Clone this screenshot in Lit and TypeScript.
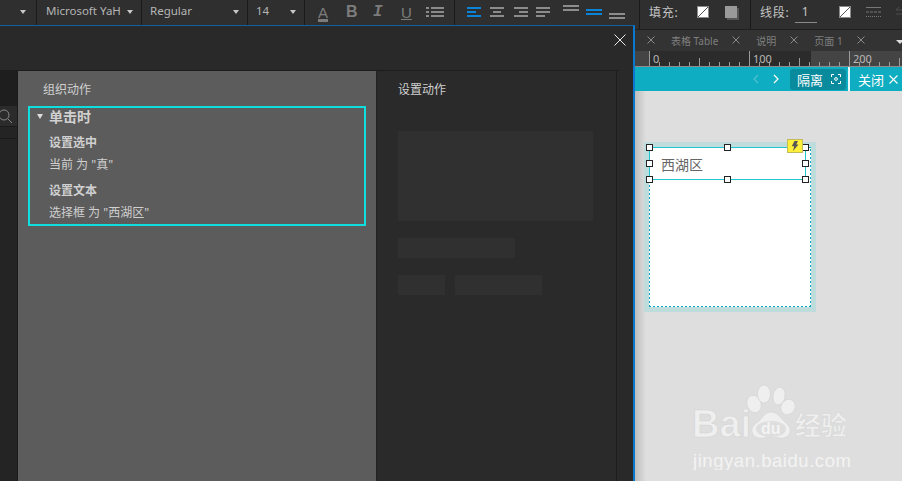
import { LitElement, html, css, svg } from "lit";
import { customElement } from "lit/decorators.js";

const CJK = `"Noto Sans", "Noto Sans CJK SC", sans-serif`;
const BLUE = "#0a84d8";
const GREY = "#8c8c8c";

const bars = (rows: [number, number, number, string][]) => html`
  <svg width="170" height="23" viewBox="0 0 170 23">
    ${rows.map(([x, y, l, c]) => svg`<rect x=${x} y=${y} width=${l} height="2" fill=${c}></rect>`)}
  </svg>`;

const noFill = html`<svg width="12" height="12" viewBox="0 0 12 12">
  <rect x=".5" y=".5" width="11" height="11" fill="#fff" stroke="#8a8a8a"></rect>
  <path d="M1 11 11 1" stroke="#555" stroke-width="1"></path></svg>`;

const cross = (s: number, c: string, sw = 1) => html`<svg width=${s} height=${s} viewBox="0 0 ${s} ${s}">
  <path d="M.5 .5 ${s - 0.5} ${s - 0.5}M${s - 0.5} .5 .5 ${s - 0.5}" stroke=${c} stroke-width=${sw} fill="none"></path></svg>`;

const handles = [649, 727, 805].flatMap((x) =>
  [147, 163, 179].filter((y) => !(x === 727 && y === 163)).map((y) => [x - 644, y - 142])
);

const ticks = Array.from({ length: 27 }, (_, i) => i * 10);

@customElement("app-root")
export class AppRoot extends LitElement {
  static styles = css`
    :host { display: block; width: 902px; height: 481px; position: relative; overflow: hidden; background: #dedede; font-family: ${css([CJK] as any)}; }
    * { box-sizing: border-box; }
    .page { display: flex; flex-direction: column; height: 481px; }

    .toolbar { display: flex; height: 30px; flex: none; background: #2f2f2f; border-bottom: 1px solid #1f1f1f; color: #b5b5b5; font-size: 11.5px; white-space: nowrap; }
    .seg { display: flex; align-items: center; height: 29px; border-right: 1px solid #1a1a1a; flex: none; padding-bottom: 8px; }
    .caret { width: 0; height: 0; border: 3.5px solid transparent; border-top: 4px solid #c8c8c8; border-bottom: 0; margin-left: auto; margin-top: 3px; }
    .s1 { width: 37px; padding-right: 10px; }
    .s2 { width: 105px; padding: 0 8px 8px 9px; }
    .s3 { width: 106px; padding: 0 8px 8px 8px; }
    .s4 { width: 57px; padding: 0 8px 8px 8px; }
    .s5 { width: 150px; padding: 0 0 5px 13px; }
    .g { color: #7c7c7c; font-family: "Liberation Sans", sans-serif; width: 28px; text-align: left; line-height: 1; }
    .g.a { font-size: 15px; width: 28px; text-decoration: underline; text-decoration-thickness: 3px; text-underline-offset: 1px; }
    .g.b { font-weight: 700; font-size: 16px; }
    .g.i { font: italic 700 16px "Liberation Mono", monospace; margin-left: -1px; width: 28px; }
    .g.u { text-decoration: underline; font-size: 15px; width: 25px; }
    .s6 { width: 185px; padding: 0 0 0 12px; align-items: flex-start; }
    .s6 svg { display: block; }
    .s7 { width: 111px; padding: 0 0 5px 9px; color: #c4c4c4; font-size: 12px; letter-spacing: .8px; }
    .s7 svg, .s8 svg { display: block; }
    .s7 .ic1 { margin-left: 18px; }
    .shadow { margin-left: 16px; width: 12px; height: 12px; background: #9a9a9a; box-shadow: 2px 2px 0 #555; }
    .s8 { flex: 1; border-right: 0; padding: 0 0 5px 9px; color: #c4c4c4; font-size: 12px; letter-spacing: .8px; }
    .num { margin-left: 5px; width: 22px; border-bottom: 1px solid #8a8a8a; padding-left: 7px; height: 18px; margin-top: 4px; line-height: 14px; flex: none; }
    .s8 .ic2 { margin-left: 22px; }
    .s8 .ic3 { margin-left: 15px; }
    .s8 .ic4 { margin-left: 14px; opacity: .35; }

    .tabs { display: flex; align-items: center; gap: 16px; height: 21px; flex: none; background: #333; padding-left: 647px; color: #7f7f7f; font-size: 10px; padding-bottom: 1px; white-space: nowrap; }
    .tabs svg { display: block; flex: none; }
    .tabs span + svg { margin-left: -2px; }
    .tabs .more { width: 0; height: 0; border: 4px solid transparent; border-top: 4px solid #ddd; border-bottom: 0; margin-left: 15px; margin-top: 4px; flex: none; }

    .ruler { display: block; height: 16px; flex: none; background: #444; border-bottom: 1px solid #8c8c8c; }
    .ruler svg { display: block; }
    .ruler text { font: 11px "Noto Sans", sans-serif; fill: #b8b8b8; }

    .isol { display: flex; align-items: center; justify-content: flex-end; height: 24px; flex: none; background: #0fadc1; color: #fff; font-size: 13px; white-space: nowrap; }
    .nav { display: block; }
    .nav.prev { margin-right: 14px; opacity: .25; }
    .nav.next { margin-right: 11px; }
    .btn { display: flex; align-items: center; gap: 8px; width: 56px; height: 21px; padding-left: 7px; border-radius: 3px; background: #0a8b9d; }
    .sep { width: 2px; height: 24px; background: #e8f8fa; margin-left: 2px; flex: none; }
    .close { display: flex; align-items: center; gap: 5px; width: 52px; padding-left: 8px; flex: none; }

    .canvas { flex: 1; position: relative; background: linear-gradient(90deg, #bdbdbd 635px, #dedede 646px); }
    .widget { position: absolute; left: 644px; top: 51px; width: 172px; height: 170px; background: #bfdcdc; }
    .paper { position: absolute; left: 5px; top: 5px; width: 162px; height: 160px; background-color: #fff;
      background-image:
        repeating-linear-gradient(90deg, #0aa9c0 0 2px, transparent 2px 4px),
        repeating-linear-gradient(90deg, #0aa9c0 0 2px, transparent 2px 4px),
        repeating-linear-gradient(0deg, #0aa9c0 0 2px, transparent 2px 4px),
        repeating-linear-gradient(0deg, #0aa9c0 0 2px, transparent 2px 4px);
      background-size: 100% 1px, 100% 1px, 1px 100%, 1px 100%;
      background-position: 0 0, 0 100%, 0 0, 100% 0;
      background-repeat: no-repeat; }
    .sel { position: absolute; left: 5px; top: 5px; width: 157px; height: 33px; border: 1px solid #1fc8d0; background: #fff; color: #666; font-size: 14px; line-height: 33px; padding-left: 11px; font-family: "Noto Sans CJK SC", sans-serif; }
    .h { position: absolute; width: 7px; height: 7px; margin: -3px 0 0 -3px; background: #fff; border: 1px solid #222; }
    .flag { position: absolute; left: 143px; top: -3px; width: 16px; height: 14px; background: #ffee3a; border: 1px solid #c2bb5c; display: flex; align-items: center; justify-content: center; }

    .wm { position: absolute; left: 690px; top: 289px; }
    .wm .t1 { font: 700 38px "Liberation Sans", sans-serif; fill: #efefef; stroke: #d4d4d4; stroke-width: .7; }
    .wm .t2 { font: 700 26px "Noto Sans CJK SC", sans-serif; fill: #efefef; stroke: #d4d4d4; stroke-width: .5; }
    .wm .t3 { font: 400 18.5px "Liberation Sans", sans-serif; fill: #f3f3f3; letter-spacing: .55px; }
    .wm .t4 { font: 700 16px "Liberation Sans", sans-serif; fill: #f3f3f3; }

    .modal { position: absolute; left: 0; top: 25px; width: 635px; height: 456px; background: #292929; border-top: 1px solid #11609f; border-right: 2px solid #0b78cf; display: flex; flex-direction: column; }
    .mhead { height: 44px; flex: none; display: flex; justify-content: flex-end; align-items: flex-start; padding: 8px 7px 0 0; }
    .mhead svg { display: block; }
    .mbody { flex: 1; display: flex; min-height: 0; width: 619px; border-top: 1px solid #1d1d1d; }
    .side { width: 18px; flex: none; background: #242424; border-right: 1px solid #1a1a1a; display: flex; flex-direction: column; overflow: hidden; }
    .side .top { height: 35px; background: #1e1e1e; flex: none; }
    .side .search { height: 21px; background: #2b2b2b; border-bottom: 1px solid #1a1a1a; flex: none; }
    .side .search svg { display: block; margin: 3px 0 0 -4px; }
    .side .row { height: 12px; flex: none; border-bottom: 1px solid #1a1a1a; }
    .org { width: 358px; flex: none; background: #5c5c5c; padding: 0 10px; color: #d0d0d0; font-size: 12px; }
    .ttl { height: 35px; display: flex; align-items: center; padding-left: 15px; }
    .box { border: 2px solid #0fdede; height: 120px; padding: 1px 0 0 19px; position: relative; }
    .ev { font-size: 14px; font-weight: 700; line-height: 16px; display: block; }
    .tri { position: absolute; left: 7px; top: 6px; width: 0; height: 0; border: 3.5px solid transparent; border-top: 5px solid #ddd; border-bottom: 0; }
    .an { font-weight: 700; line-height: 18px; margin-top: 9px; }
    .av { line-height: 18px; margin-top: 4px; }
    .an.second { margin-top: 8px; }
    .act { width: 241px; flex: none; background: #2a2a2a; border-left: 1px solid #222; border-right: 1px solid #1d1d1d; padding: 0 0 0 21px; color: #d0d0d0; font-size: 12px; }
    .act .ttl { padding-left: 0; }
    .ph { background: #303030; }
    .p1 { width: 195px; height: 90px; margin-top: 25px; }
    .p2 { width: 117px; height: 20px; margin-top: 17px; }
    .prow { display: flex; gap: 10px; margin-top: 17px; }
    .p3 { width: 47px; height: 20px; }
    .p4 { width: 87px; height: 20px; }
  `;

  render() {
    return html`
      <div class="page">
        <div class="toolbar">
          <div class="seg s1"><i class="caret"></i></div>
          <div class="seg s2">Microsoft YaH<i class="caret"></i></div>
          <div class="seg s3">Regular<i class="caret"></i></div>
          <div class="seg s4">14<i class="caret"></i></div>
          <div class="seg s5">
            <span class="g a">A</span>
            <span class="g b">B</span>
            <span class="g i">I</span>
            <span class="g u">U</span>
            <svg width="18" height="12" viewBox="0 0 18 12"><g fill="#8a8a8a"><rect y="1" width="3" height="2"></rect><rect y="5" width="3" height="2"></rect><rect y="9" width="3" height="2"></rect><rect x="5" y="1" width="13" height="2"></rect><rect x="5" y="5" width="13" height="2"></rect><rect x="5" y="9" width="13" height="2"></rect></g></svg>
          </div>
          <div class="seg s6">
            ${bars([
              [0, 7, 14, BLUE], [0, 11, 9, BLUE], [0, 15, 14, BLUE],
              [23, 7, 14, GREY], [26, 11, 8, GREY], [23, 15, 14, GREY],
              [47, 7, 14, GREY], [52, 11, 9, GREY], [47, 15, 14, GREY],
              [69, 7, 14, GREY], [69, 11, 14, GREY], [69, 15, 9, GREY],
              [96, 5, 16, GREY], [96, 9, 16, GREY],
              [119, 9, 16, BLUE], [119, 13, 16, BLUE],
              [142, 13, 16, GREY], [142, 17, 16, GREY],
            ])}
          </div>
          <div class="seg s7">
            <span>填充:</span>
            <span class="ic1">${noFill}</span>
            <i class="shadow"></i>
          </div>
          <div class="seg s8">
            <span>线段:</span>
            <span class="num">1</span>
            <span class="ic2">${noFill}</span>
            <span class="ic3"><svg width="15" height="12" viewBox="0 0 15 12"><path d="M0 1.5h15" stroke="#777"></path><path d="M0 6h15" stroke="#777" stroke-dasharray="3 1"></path><path d="M0 10.5h15" stroke="#777" stroke-dasharray="1 1"></path></svg></span>
            <span class="ic4"><svg width="10" height="12" viewBox="0 0 10 12"><path d="M10 4H1l3-3M1 8h9" stroke="#888" fill="none"></path></svg></span>
          </div>
        </div>

        <div class="tabs">
          ${cross(8, "#8a8a8a")}
          <span>表格 Table</span>${cross(8, "#8a8a8a")}
          <span>说明</span>${cross(8, "#8a8a8a")}
          <span>页面 1</span>${cross(8, "#8a8a8a")}
          <i class="more"></i>
        </div>

        <div class="ruler">
          <svg width="902" height="15" viewBox="0 0 902 15">
            <rect x="649" y="0" width="162" height="15" fill="#2b2b2b"></rect>
            ${ticks.map((t) => {
              const x = 649.5 + t;
              const h = t % 100 === 0 ? 15 : t % 50 === 0 ? 8 : 4;
              return x < 902 ? svg`<rect x=${x - 0.5} y=${15 - h} width="1" height=${h} fill="#9a9a9a"></rect>` : null;
            })}
            <text x="653" y="12">0</text>
            <text x="753" y="12">100</text>
            <text x="853" y="12">200</text>
          </svg>
        </div>

        <div class="isol">
          <svg class="nav prev" width="6" height="10" viewBox="0 0 6 10"><path d="M5 1 1 5l4 4" stroke="#fff" stroke-width="1.2" fill="none"></path></svg>
          <svg class="nav next" width="6" height="10" viewBox="0 0 6 10"><path d="M1 1l4 4-4 4" stroke="#fff" stroke-width="1.2" fill="none"></path></svg>
          <div class="btn">
            <span>隔离</span>
            <svg width="10" height="10" viewBox="0 0 10 10"><path d="M.5 3V.5H3M7 .5h2.5V3M9.5 7v2.5H7M3 9.5H.5V7" stroke="#fff" fill="none"></path><circle cx="5" cy="5" r="1.4" fill="none" stroke="#fff"></circle></svg>
          </div>
          <i class="sep"></i>
          <div class="close"><span>关闭</span>${cross(9, "#fff", 1.1)}</div>
        </div>

        <div class="canvas">
          <div class="widget">
            <div class="paper"></div>
            <div class="sel">西湖区</div>
            ${handles.map(([x, y]) => html`<i class="h" style="left:${x}px;top:${y}px"></i>`)}
            <div class="flag"><svg width="8" height="10" viewBox="0 0 8 10"><path d="M3.5 0H7L5.2 3.5H7.5L2 10l1.2-4.7H.8z" fill="#555"></path></svg></div>
          </div>
          <svg class="wm" width="170" height="90" viewBox="0 0 170 90">
            <text class="t1" x="2" y="57">Bai</text>
            <g fill="#efefef" stroke="#d4d4d4" stroke-width=".7">
              <ellipse cx="64" cy="24" rx="7" ry="9" transform="rotate(-20 64 24)"></ellipse>
              <ellipse cx="74" cy="14" rx="6.5" ry="9"></ellipse>
              <ellipse cx="89" cy="16" rx="6" ry="9" transform="rotate(10 89 16)"></ellipse>
              <ellipse cx="98" cy="27" rx="7" ry="8" transform="rotate(30 98 27)"></ellipse>
              <path d="M81 32c6 0 9 5 13 9 5 4 7 7 6 11-1 5-6 7-11 6-5-1-10-1-15 0-6 1-11-1-12-6-1-4 2-8 7-11 4-4 6-9 12-9z"></path>
            </g>
            <ellipse cx="81" cy="49" rx="15" ry="8" fill="#dedede"></ellipse>
            <text class="t4" x="71" y="54">du</text>
            <text class="t2" x="105" y="55">经验</text>
            <text class="t3" x="3" y="87">jingyan.baidu.com</text>
          </svg>
        </div>
      </div>

      <div class="modal">
        <div class="mhead">${cross(12, "#e8e8e8")}</div>
        <div class="mbody">
          <div class="side">
            <div class="top"></div>
            <div class="search">
              <svg width="18" height="16" viewBox="0 0 18 16"><circle cx="8" cy="6" r="5" fill="none" stroke="#8a8a8a"></circle><path d="M12 10l4 4" stroke="#8a8a8a"></path></svg>
            </div>
            <div class="row"></div>
          </div>
          <div class="org">
            <div class="ttl">组织动作</div>
            <div class="box">
              <i class="tri"></i>
              <span class="ev">单击时</span>
              <div class="an">设置选中</div>
              <div class="av">当前 为 "真"</div>
              <div class="an second">设置文本</div>
              <div class="av">选择框 为 "西湖区"</div>
            </div>
          </div>
          <div class="act">
            <div class="ttl">设置动作</div>
            <div class="ph p1"></div>
            <div class="ph p2"></div>
            <div class="prow"><div class="ph p3"></div><div class="ph p4"></div></div>
          </div>
        </div>
      </div>
    `;
  }
}
